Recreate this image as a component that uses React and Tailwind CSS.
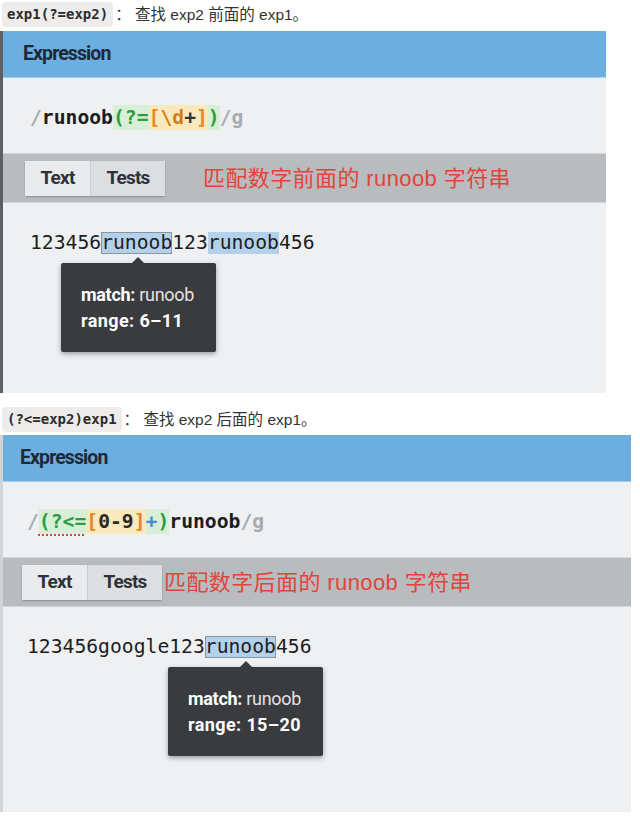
import React from "react";

const mono = { fontFamily: '"DejaVu Sans Mono", "Liberation Mono", monospace' };
const sans = { fontFamily: 'Roboto, "Liberation Sans", sans-serif' };
const cjk = { fontFamily: '"Liberation Sans", "Noto Sans CJK SC", sans-serif' };

const Label = ({ code, text }) => (
  <div className="flex items-center h-[25px] pl-[2px]">
    <span
      className="h-[25px] px-[5px] flex items-center rounded-[4px] bg-[#eeecea] text-[#2b2b2b] font-bold text-[14px]"
      style={mono}
    >
      {code}
    </span>
    <span className="ml-[2px] text-[15.5px] text-[#333]" style={cjk}>
      ：{text}
    </span>
  </div>
);

const Tabs = ({ note }) => (
  <div className="flex items-center">
    <div className="flex shadow-[0_1px_2px_rgba(0,0,0,0.25)] rounded-[2px]" style={sans}>
      <div className="w-[66px] h-[35px] flex items-center justify-center bg-[#e9ebed] text-[19px] font-bold tracking-[-0.8px] text-[#2f3338] border-r border-[#c9ccd0]">
        Text
      </div>
      <div className="w-[74px] h-[35px] flex items-center justify-center bg-[#dcdee1] text-[19px] font-bold tracking-[-0.8px] text-[#2f3338]">
        Tests
      </div>
    </div>
    {note}
  </div>
);

const Tooltip = ({ left, arrow, match, range }) => (
  <div
    className="absolute top-[31px] w-[155px] h-[89px] bg-[#3a3b3e] rounded-[2px] shadow-[0_2px_5px_rgba(0,0,0,0.35)] pl-[20px] pt-[19px]"
    style={{ ...sans, left }}
  >
    <div
      className="absolute top-[-6px] w-0 h-0 border-l-[6px] border-r-[6px] border-b-[6px] border-l-transparent border-r-transparent border-b-[#3a3b3e]"
      style={{ left: arrow }}
    />
    <div className="text-[18px] leading-[26px] tracking-[-0.3px]">
      <span className="font-bold text-white">match:</span>
      <span className="text-[#e3e3e3]"> {match}</span>
    </div>
    <div className="text-[18px] leading-[26px] font-bold text-white tracking-[0.4px]">
      range: {range}
    </div>
  </div>
);

const Panel = ({ width, edge, pad, expr, note, textLine, tooltip, height }) => (
  <div className={`flex flex-col ${width} ${height} ${edge}`}>
    <div className="h-[47px] bg-[#6daee0] flex items-center border-b border-[#a9cbe6]" style={{ paddingLeft: pad - 7 }}>
      <span className="text-[19.5px] font-bold text-[#1c2a38] tracking-[-0.9px]" style={sans}>
        Expression
      </span>
    </div>
    <div className="h-[75px] bg-[#eef0f2] flex items-center pt-[4px]" style={{ paddingLeft: pad }}>
      <div className="text-[19.7px] font-bold leading-[25px] flex" style={mono}>
        {expr}
      </div>
    </div>
    <div className="h-[50px] bg-[#b8bcbf] flex items-center border-y border-[#d3d6d9]" style={{ paddingLeft: pad - 5 }}>
      <Tabs note={note} />
    </div>
    <div className="flex-1 bg-[#eef0f2] relative" style={{ paddingLeft: pad, paddingTop: 29 }}>
      <div className="relative text-[19.7px] leading-[22px] text-[#1e1e1e] flex" style={mono}>
        {textLine}
        {tooltip}
      </div>
    </div>
  </div>
);

const Note = ({ children, ml }) => (
  <span className="text-[22px] tracking-[0.4px] text-[#e2443b]" style={{ ...cjk, marginLeft: ml }}>
    {children}
  </span>
);

export default function App() {
  const gray = "text-[#a7abb0]";
  const green = "text-[#2f9c3f]";
  const orange = "text-[#e4862a]";

  const expr1 = (
    <>
      <span className={gray}>/</span>
      <span className="text-[#1d1d1d]">runoob</span>
      <span className="bg-[#d6efd6] flex">
        <span className={green}>(?=</span>
        <span className="bg-[#f8eabd] flex">
          <span className={orange}>[</span>
          <span className="text-[#d57c1c]">\d</span>
          <span className="text-[#333]">+</span>
          <span className={orange}>]</span>
        </span>
        <span className={green}>)</span>
      </span>
      <span className={gray}>/g</span>
    </>
  );

  const expr2 = (
    <>
      <span className={gray}>/</span>
      <span className="bg-[#d6efd6] flex">
        <span className={`${green} underline decoration-dotted decoration-[#e0403a] decoration-2 underline-offset-[6px]`}>(?&lt;=</span>
        <span className="bg-[#f8eabd] flex">
          <span className={orange}>[</span>
          <span className="text-[#2a2a2a]">0-9</span>
          <span className={orange}>]</span>
        </span>
        <span className="text-[#4a8bdc]">+</span>
        <span className={green}>)</span>
      </span>
      <span className="text-[#1d1d1d]">runoob</span>
      <span className={gray}>/g</span>
    </>
  );

  const text1 = (
    <>
      <span>123456</span>
      <span className="bg-[#b3d1ea] shadow-[inset_0_0_0_1px_#8d939a]">runoob</span>
      <span>123</span>
      <span className="bg-[#b3d1ea]">runoob</span>
      <span>456</span>
    </>
  );

  const text2 = (
    <>
      <span>123456google123</span>
      <span className="bg-[#b3d1ea] shadow-[inset_0_0_0_1px_#8d939a]">runoob</span>
      <span>456</span>
    </>
  );

  return (
    <div className="w-[640px] h-[818px] bg-white overflow-hidden pt-[2px]">
      <Label code="exp1(?=exp2)" text=" 查找 exp2 前面的 exp1。" />
      <div className="mt-[4px]">
        <Panel
          width="w-[606px]"
          height="h-[362px]"
          edge="border-l-[3px] border-[#5d6166]"
          pad={27}
          expr={expr1}
          note={<Note ml={38}>匹配数字前面的 runoob 字符串</Note>}
          textLine={text1}
          tooltip={<Tooltip left={31} arrow={71} match="runoob" range="6–11" />}
        />
      </div>
      <div className="mt-[14px]">
        <Label code="(?<=exp2)exp1" text=" 查找 exp2 后面的 exp1。" />
      </div>
      <div className="mt-[3px]">
        <Panel
          width="w-[631px]"
          height="h-[377px]"
          edge="border-l-[3px] border-[#d2d4d6]"
          pad={24}
          expr={expr2}
          note={<Note ml={2}>匹配数字后面的 runoob 字符串</Note>}
          textLine={text2}
          tooltip={<Tooltip left={141} arrow={72} match="runoob" range="15–20" />}
        />
      </div>
    </div>
  );
}
